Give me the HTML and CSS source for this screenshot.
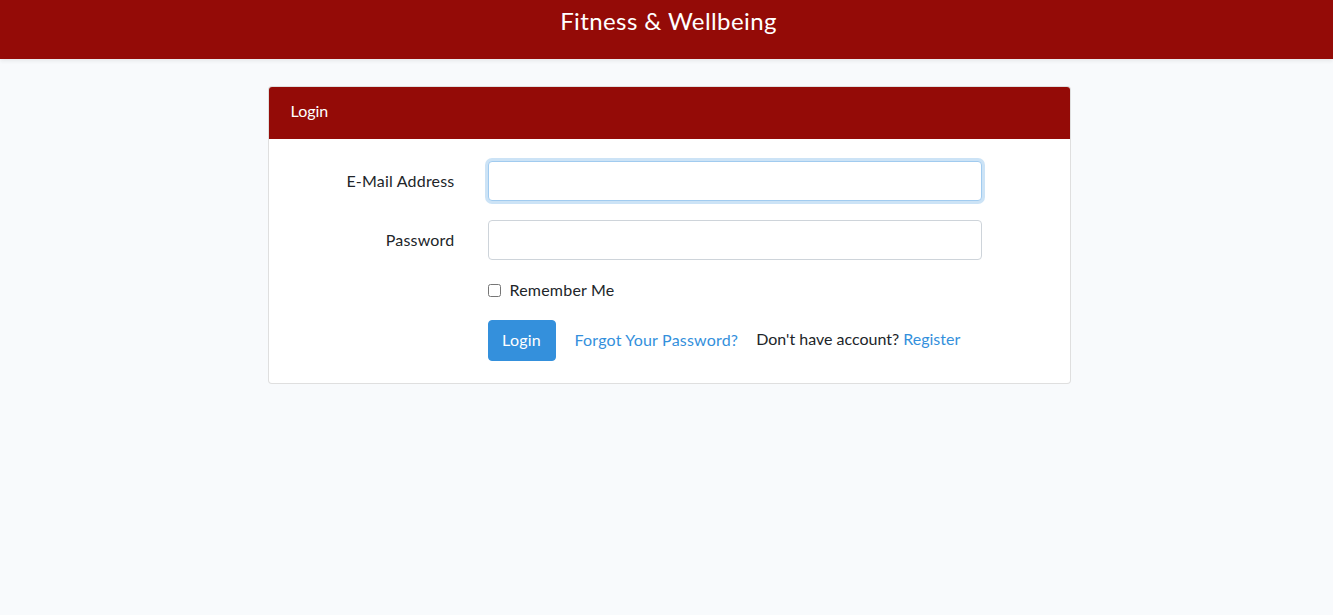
FILE: index.html
```html
<!DOCTYPE html>
<html lang="en">
<head>
<meta charset="utf-8">
<title>Fitness &amp; Wellbeing</title>
<link rel="stylesheet" href="styles.css">
</head>
<body>
<header class="topbar">
  <span class="brand">Fitness &amp; Wellbeing</span>
</header>
<main class="main">
  <section class="card">
    <div class="card-header">Login</div>
    <form class="card-body">
      <div class="row first">
        <label class="label" for="email">E-Mail Address</label>
        <input class="input focused" id="email" type="email">
      </div>
      <div class="row">
        <label class="label" for="password">Password</label>
        <input class="input" id="password" type="password">
      </div>
      <div class="row check-row">
        <span class="label"></span>
        <label class="check"><input type="checkbox" class="checkbox"> Remember Me</label>
      </div>
      <div class="row action-row">
        <span class="label"></span>
        <div class="actions">
          <button type="button" class="btn">Login</button>
          <a class="link forgot" href="#">Forgot Your Password?</a>
          <span class="register">Don't have account? <a class="link" href="#">Register</a></span>
        </div>
      </div>
    </form>
  </section>
</main>
</body>
</html>
```

FILE: styles.css
```css
* { box-sizing: border-box; }
html, body { margin: 0; }
body {
  background: #f8fafc;
  font-family: Lato, "Noto Sans", sans-serif;
  font-size: 16px;
  color: #212529;
  line-height: 1.6;
}
.topbar {
  height: 59px;
  background: #940b07;
  display: flex;
  justify-content: center;
  padding-top: 4px;
  box-shadow: 0 2px 4px rgba(0,0,0,.075);
}
.brand {
  color: #fff;
  font-size: 24px;
  letter-spacing: 0.4px;
  line-height: 34px;
  margin-left: 4px;
}
.main {
  display: flex;
  justify-content: center;
  padding: 27px 0 0 5px;
}
.card {
  width: 803px;
  background: #fff;
  border: 1px solid rgba(0,0,0,.125);
  border-radius: 4px;
  overflow: hidden;
}
.card-header {
  background: #940b07;
  color: #fff;
  height: 52px;
  padding: 11px 22px;
  font-size: 16px;
}
.card-body {
  padding: 22px 0 22px 0;
  display: flex;
  flex-direction: column;
  letter-spacing: 0.2px;
}
.row {
  display: flex;
  align-items: center;
  margin-bottom: 18px;
}
.row.first { margin-bottom: 19px; }
.label {
  width: 186px;
  text-align: right;
  flex: none;
  margin-right: 33px;
  padding-bottom: 1px;
}
.input {
  width: 494px;
  height: 40px;
  border: 1px solid #ced4da;
  border-radius: 4px;
  font: inherit;
  padding: 6px 12px;
  background: #fff;
}
.input.focused {
  border-color: #a1cbef;
  box-shadow: 0 0 0 3px rgba(52,144,220,.25);
  outline: none;
}
.check-row { margin-top: 2px; margin-bottom: 20px; height: 20px; }
.check {
  display: flex;
  align-items: center;
  gap: 9px;
}
.checkbox { margin: 0; width: 13px; height: 13px; }
.action-row { margin-bottom: 0; }
.actions {
  display: flex;
  align-items: center;
}
.btn {
  background: #3490dc;
  color: #fff;
  border: 1px solid #3490dc;
  border-radius: 4px;
  font: inherit;
  letter-spacing: 0.2px;
  height: 41px;
  width: 68px;
  padding: 0 0 2px 0;
}
.link { color: #3490dc; text-decoration: none; }
.forgot { margin-left: 19px; margin-right: 18px; padding-bottom: 2px; }
.register { letter-spacing: 0; padding-bottom: 3px; }
```
